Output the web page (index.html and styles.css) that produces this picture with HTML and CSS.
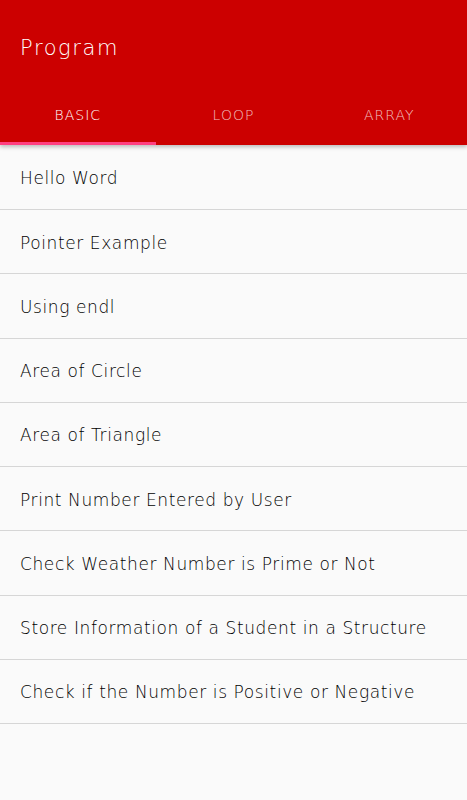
FILE: index.html
```html
<!DOCTYPE html>
<html>
<head>
<meta charset="utf-8">
<link rel="stylesheet" href="styles.css">
</head>
<body>
<header class="appbar">
  <div class="toolbar"><span class="title">Program</span></div>
  <nav class="tabs">
    <div class="tab active">BASIC</div>
    <div class="tab">LOOP</div>
    <div class="tab">ARRAY</div>
  </nav>
</header>
<ul class="list">
  <li class="item">Hello Word</li>
  <li class="item">Pointer Example</li>
  <li class="item">Using endl</li>
  <li class="item">Area of Circle</li>
  <li class="item">Area of Triangle</li>
  <li class="item">Print Number Entered by User</li>
  <li class="item">Check Weather Number is Prime or Not</li>
  <li class="item">Store Information of a Student in a Structure</li>
  <li class="item">Check if the Number is Positive or Negative</li>
</ul>
</body>
</html>
```
FILE: styles.css
```css
html, body {
  margin: 0;
  padding: 0;
  background: #fafafa;
  font-family: "DejaVu Sans", sans-serif;
  font-weight: 200;
}
.appbar {
  background: #cc0000;
  box-shadow: 0 2px 4px rgba(0,0,0,0.25);
  position: relative;
  z-index: 1;
}
.toolbar {
  height: 97px;
  display: flex;
  align-items: center;
  padding-left: 20px;
  box-sizing: border-box;
  padding-bottom: 2px;
}
.title {
  color: #fff;
  font-size: 21px;
  letter-spacing: 1.6px;
}
.tabs {
  display: flex;
  height: 48px;
}
.tab {
  flex: 1;
  display: flex;
  align-items: center;
  justify-content: center;
  color: rgba(255,255,255,0.75);
  font-size: 14px;
  letter-spacing: 1px;
  box-sizing: border-box;
  padding-bottom: 13px;
}
.tab.active {
  color: #fff;
  border-bottom: 3px solid #ff4081;
  padding-bottom: 10px;
}
.list {
  list-style: none;
  margin: 0;
  padding: 0.75px 0 0;
}
.item {
  height: 61.25px;
  border-bottom: 1px solid #d6d6d6;
  display: flex;
  align-items: center;
  padding: 2px 0 0 20px;
  font-size: 17px;
  letter-spacing: 0.6px;
  color: #000;
}
```
